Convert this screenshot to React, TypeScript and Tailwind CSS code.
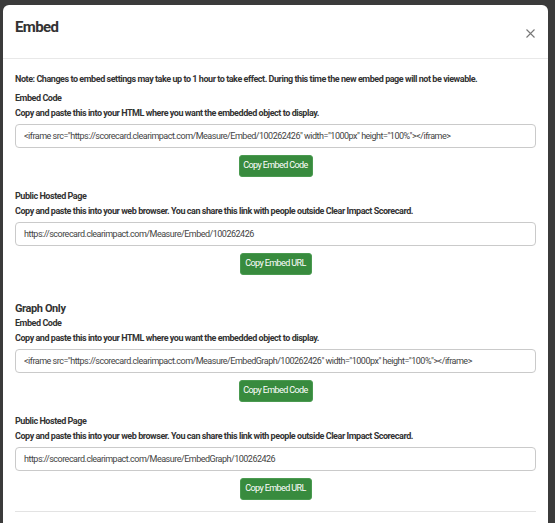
import React from 'react';

const font = { fontFamily: 'Roboto, "Liberation Sans", sans-serif' };

interface FieldBlockProps {
  heading: string;
  hint: string;
  value: string;
  button: string;
  buttonWidth: string;
}

const FieldBlock: React.FC<FieldBlockProps> = ({ heading, hint, value, button, buttonWidth }) => {
  return (
    <div className="flex flex-col">
      <div className="text-[9px] font-bold leading-[15px] tracking-[-0.45px] text-[#333]">{heading}</div>
      <div className="text-[9px] font-bold leading-[15px] tracking-[-0.45px] text-[#333]">{hint}</div>
      <input
        readOnly
        value={value}
        className="mt-[3px] h-[24px] w-full rounded-[4px] border border-[#cacaca] bg-white px-[8px] text-[9px] tracking-[-0.5px] text-[#444] outline-none"
      />
      <div className="flex justify-center pt-[7px]">
        <button
          className={`h-[22px] ${buttonWidth} rounded-[3px] border border-[#4a9a50] bg-[#388b3e] text-[9px] tracking-[-0.6px] text-white`}
        >
          {button}
        </button>
      </div>
    </div>
  );
};

const App: React.FC = () => {
  return (
    <div className="h-[523px] w-[555px] overflow-hidden bg-[#3b3b3b] pl-[3px] pr-[7px] pt-[5px]" style={font}>
      <div className="h-full rounded-t-[6px] bg-white">
        {/* header */}
        <div className="flex h-[54px] items-start justify-between border-b border-[#e8e8e8] pl-[12px] pr-[13px]">
          <h1 className="mt-[12px] text-[15px] font-bold leading-[20px] tracking-[-0.6px] text-[#333]">Embed</h1>
          <button className="mt-[24px] text-[#777]">
            <svg width="9" height="9" viewBox="0 0 9 9" fill="none" stroke="currentColor" strokeWidth="1.1">
              <path d="M0.5 0.5L8.5 8.5M8.5 0.5L0.5 8.5" />
            </svg>
          </button>
        </div>

        {/* body */}
        <div className="px-[12px] pt-[13px]">
          <p className="text-[9px] font-bold leading-[15px] tracking-[-0.45px] text-[#333]">
            Note: Changes to embed settings may take up to 1 hour to take effect. During this time the new embed page will not be viewable.
          </p>

          <div className="mt-[4px] flex flex-col gap-[12px]">
            <FieldBlock
              heading="Embed Code"
              hint="Copy and paste this into your HTML where you want the embedded object to display."
              value={'<iframe src="https://scorecard.clearimpact.com/Measure/Embed/100262426" width="1000px" height="100%"></iframe>'}
              button="Copy Embed Code"
              buttonWidth="w-[74px]"
            />
            <FieldBlock
              heading="Public Hosted Page"
              hint="Copy and paste this into your web browser. You can share this link with people outside Clear Impact Scorecard."
              value="https://scorecard.clearimpact.com/Measure/Embed/100262426"
              button="Copy Embed URL"
              buttonWidth="w-[72px]"
            />
          </div>

          <h2 className="mt-[27px] text-[11px] font-bold leading-[14px] tracking-[-0.4px] text-[#333]">Graph Only</h2>
          <div className="flex flex-col gap-[12px]">
            <FieldBlock
              heading="Embed Code"
              hint="Copy and paste this into your HTML where you want the embedded object to display."
              value={'<iframe src="https://scorecard.clearimpact.com/Measure/EmbedGraph/100262426" width="1000px" height="100%"></iframe>'}
              button="Copy Embed Code"
              buttonWidth="w-[74px]"
            />
            <FieldBlock
              heading="Public Hosted Page"
              hint="Copy and paste this into your web browser. You can share this link with people outside Clear Impact Scorecard."
              value="https://scorecard.clearimpact.com/Measure/EmbedGraph/100262426"
              button="Copy Embed URL"
              buttonWidth="w-[72px]"
            />
          </div>
          <div className="mt-[11px] border-t border-[#e3e3e3]" />
        </div>
      </div>
    </div>
  );
};

export default App;
